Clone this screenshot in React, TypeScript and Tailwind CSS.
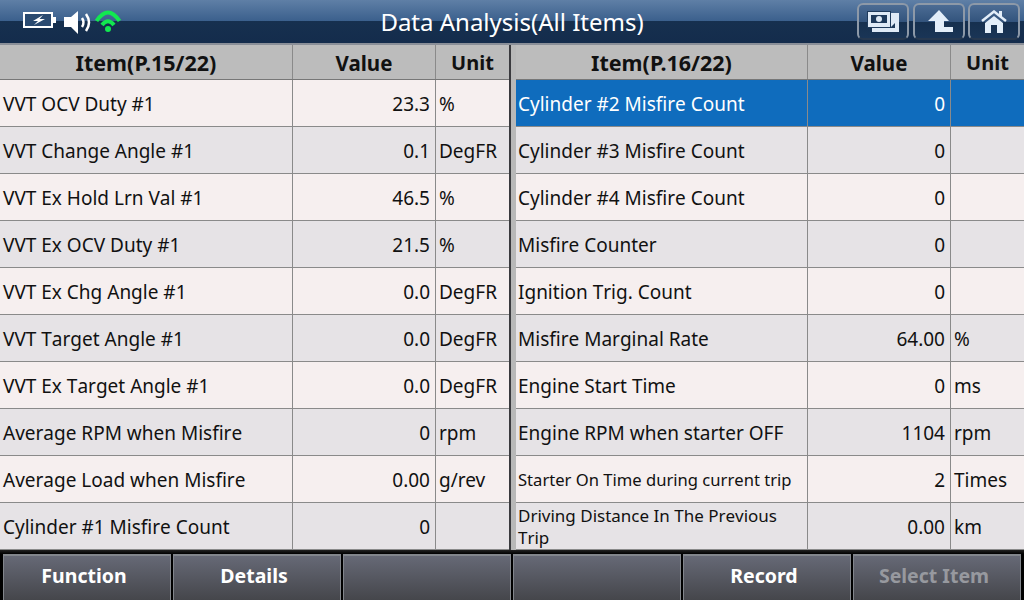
import type { ReactNode } from 'react';

const leftRows = [
  ['VVT OCV Duty #1', '23.3', '%'],
  ['VVT Change Angle #1', '0.1', 'DegFR'],
  ['VVT Ex Hold Lrn Val #1', '46.5', '%'],
  ['VVT Ex OCV Duty #1', '21.5', '%'],
  ['VVT Ex Chg Angle #1', '0.0', 'DegFR'],
  ['VVT Target Angle #1', '0.0', 'DegFR'],
  ['VVT Ex Target Angle #1', '0.0', 'DegFR'],
  ['Average RPM when Misfire', '0', 'rpm'],
  ['Average Load when Misfire', '0.00', 'g/rev'],
  ['Cylinder #1 Misfire Count', '0', ''],
];

const rightRows = [
  ['Cylinder #2 Misfire Count', '0', ''],
  ['Cylinder #3 Misfire Count', '0', ''],
  ['Cylinder #4 Misfire Count', '0', ''],
  ['Misfire Counter', '0', ''],
  ['Ignition Trig. Count', '0', ''],
  ['Misfire Marginal Rate', '64.00', '%'],
  ['Engine Start Time', '0', 'ms'],
  ['Engine RPM when starter OFF', '1104', 'rpm'],
  ['Starter On Time during current trip', '2', 'Times'],
  ['Driving Distance In The Previous Trip', '0.00', 'km'],
];

function Table({
  page,
  rows,
  selected,
  className,
  itemWidth,
  padLeft,
}: {
  page: string;
  rows: string[][];
  selected?: number;
  className: string;
  itemWidth: string;
  padLeft: string;
}) {
  return (
    <div className={`flex flex-col ${className}`}>
      <div className="flex h-[35px] bg-[#bcbcbc] border-b border-[#777] font-bold text-[#111]">
        <div className={`${itemWidth} flex items-center justify-center pt-[2px] border-r border-[#8a8a8a] text-[21.5px]`}>
          Item({page})
        </div>
        <div className="w-[143px] flex items-center justify-center pt-[2px] border-r border-[#8a8a8a] text-[20.5px]">Value</div>
        <div className="flex-1 flex items-center justify-center pt-[2px] text-[20px]">Unit</div>
      </div>
      {rows.map((row, i) => {
        const isSel = selected === i;
        const bg = isSel ? 'bg-[#0f6cbd] text-white' : i % 2 === 0 ? 'bg-[#f6efef] text-[#111]' : 'bg-[#e6e3e6] text-[#111]';
        const small = row[0].startsWith('Starter');
        const wrap = row[0].startsWith('Driving');
        return (
          <div key={row[0]} className={`flex h-[47px] border-b border-[#8a8a8a] ${bg}`}>
            <div
              className={`${itemWidth} flex items-center ${padLeft} border-r border-[#8a8a8a] [font-kerning:none] ${
                small ? 'text-[16.6px] pt-[2px]' : wrap ? 'text-[17px] leading-[22px] pt-[2px]' : 'pt-[2px]'
              }`}
            >
              {row[0]}
            </div>
            <div className="w-[143px] flex items-center justify-end pr-[5px] pt-[2px] border-r border-[#8a8a8a]">{row[1]}</div>
            <div className="flex-1 flex items-center pl-[3px] pt-[2px]">{row[2]}</div>
          </div>
        );
      })}
    </div>
  );
}

function HeaderButton({ children }: { children: ReactNode }) {
  return (
    <div className="w-[52px] h-[37px] rounded-[6px] border-2 border-[#8d99a8] border-b-[#26384f] bg-[linear-gradient(#4c6c94_0%,#33547d_50%,#16304f_52%,#1a3556_100%)] flex items-center justify-center">
      {children}
    </div>
  );
}

export default function App() {
  return (
    <div className="w-[1024px] h-[600px] overflow-hidden bg-black flex flex-col text-[19px] font-['Noto_Sans',sans-serif]">
      {/* Title bar */}
      <div className="h-[45px] relative flex items-start justify-between bg-[linear-gradient(#5f7fa6_0%,#3a5f8c_50%,#16304f_50%,#142c4c_100%)] border-b-2 border-[#8a8f98]">
        <div className="flex items-start pl-[23px] pt-[10px]">
          <svg width="33" height="16" viewBox="0 0 33 16" className="mt-[2px]">
            <rect x="1" y="1" width="28" height="14" fill="#2a4a70" stroke="#fff" strokeWidth="2" />
            <rect x="29" y="5" width="4" height="6" fill="#fff" />
            <path d="M20 3 L10 9 L15 9 L11 13 L22 7 L16.5 7 Z" fill="#fff" />
          </svg>
          <svg width="28" height="24" viewBox="0 0 28 24" className="ml-[8px] mt-[1px]">
            <path d="M0 6 H7 L14 0 V23 L7 16 H0 Z" fill="#fff" />
            <path d="M18 7 Q21 11.5 18 16" stroke="#fff" strokeWidth="2.5" fill="none" />
            <path d="M22 3 Q28 11.5 22 20" stroke="#fff" strokeWidth="2.5" fill="none" />
          </svg>
          <svg width="26" height="22" viewBox="0 0 26 22" className="ml-[3px]">
            <path d="M1.5 11 Q13 -6 24.5 11" stroke="#12e850" strokeWidth="4" fill="none" />
            <path d="M7 15 Q13 7.5 19 15" stroke="#12e850" strokeWidth="4" fill="none" />
            <circle cx="13" cy="19" r="3" fill="#12e850" />
          </svg>
        </div>
        <div className="absolute inset-x-0 top-0 h-full flex items-center justify-center text-white text-[24px]">
          Data Analysis(All Items)
        </div>
        <div className="relative flex gap-[3px] pr-[4px] pt-[3px]">
          <div className="mr-[1px]">
            <HeaderButton>
              <svg width="34" height="24" viewBox="0 0 34 24">
                <rect x="6" y="3" width="27" height="19" fill="#dfeaf6" />
                <rect x="1.5" y="1.5" width="23" height="16" fill="#dfeaf6" stroke="#1f3b5c" />
                <rect x="5" y="5" width="16" height="8" fill="#1f3b5c" />
                <circle cx="13" cy="9" r="3" fill="#dfeaf6" />
                <path d="M24 18 L29 13 V18 Z" fill="#1f3b5c" />
              </svg>
            </HeaderButton>
          </div>
          <HeaderButton>
            <svg width="30" height="24" viewBox="0 0 30 24" fill="#e3eef9">
              <path d="M15 0 L25 11 H20 V17 H29 V22 H11 V11 H4 Z" />
            </svg>
          </HeaderButton>
          <HeaderButton>
            <svg width="28" height="24" viewBox="0 0 28 24" fill="#e3eef9">
              <path d="M2 11 L14 1.5 L26 11" stroke="#e3eef9" strokeWidth="2.5" fill="none" />
              <rect x="19" y="1" width="3" height="6" />
              <path d="M5 13 L14 6 L23 13 V23 H17 V15 H11 V23 H5 Z" />
            </svg>
          </HeaderButton>
        </div>
      </div>

      {/* Tables */}
      <div className="flex h-[505px]">
        <Table page="P.15/22" rows={leftRows} className="w-[509px]" itemWidth="w-[293px]" padLeft="pl-[3px]" />
        <div className="w-[7px] flex">
          <div className="w-[2px] bg-[#3a3a3e]" />
          <div className="flex-1 bg-[#b8b8b8]" />
        </div>
        <Table page="P.16/22" rows={rightRows} selected={0} className="flex-1" itemWidth="w-[292px]" padLeft="pl-[2px]" />
      </div>

      {/* Bottom bar */}
      <div className="flex-1 flex gap-[2px] bg-[linear-gradient(#222_0%,#000_8%)] pt-[4px] pl-[3px] pr-[3px]">
        {['Function', 'Details', '', '', 'Record', 'Select Item'].map((label, i) => (
          <div
            key={i}
            className={`flex-1 flex items-center justify-center pr-[6px] pb-[4px] font-bold text-[19.5px] border-t-2 border-x border-[#82868c] bg-[linear-gradient(#666976,#45464b)] ${
              label === 'Select Item' ? 'text-[#97999f]' : 'text-white'
            }`}
          >
            {label}
          </div>
        ))}
      </div>
    </div>
  );
}
